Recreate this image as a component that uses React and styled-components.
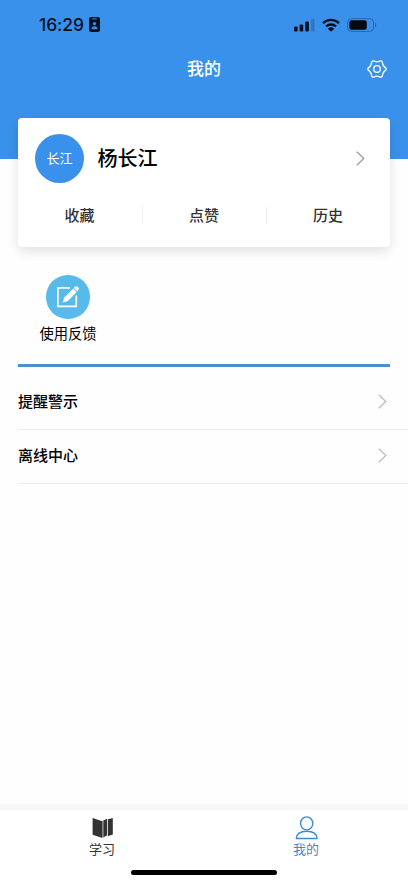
import React, { useState } from "react";
import styled, { createGlobalStyle } from "styled-components";

const GlobalStyle = createGlobalStyle`
  * {
    box-sizing: border-box;
  }

  body {
    margin: 0;
    background: #fefefe;
    font-family: "Noto Sans CJK SC", sans-serif;
    color: #000;
  }

  button {
    border: none;
    background: none;
    padding: 0;
    font: inherit;
    color: inherit;
  }
`;

const stats = ["收藏", "点赞", "历史"];
const menu = ["提醒警示", "离线中心"];

export default function App() {
  const [tab, setTab] = useState("mine"); // study | mine

  return (
    <Page>
      <GlobalStyle />
      <Header>
        <StatusBar>
          <Clock>
            16:29
            <BadgeIcon />
          </Clock>
          <Signals>
            <CellIcon />
            <WifiIcon />
            <BatteryIcon />
          </Signals>
        </StatusBar>
        <TitleBar>
          <Title>我的</Title>
          <SettingsButton aria-label="设置">
            <GearIcon />
          </SettingsButton>
        </TitleBar>
      </Header>

      <ProfileCard>
        <Profile>
          <Avatar>长江</Avatar>
          <Name>杨长江</Name>
          <Chevron color="#999" />
        </Profile>
        <Stats>
          {stats.map((label) => (
            <Stat key={label}>{label}</Stat>
          ))}
        </Stats>
      </ProfileCard>

      <Tools>
        <Tool>
          <ToolCircle>
            <EditIcon />
          </ToolCircle>
          <ToolLabel>使用反馈</ToolLabel>
        </Tool>
      </Tools>

      <Menu>
        {menu.map((label) => (
          <MenuRow key={label}>
            {label}
            <Chevron color="#bbb" />
          </MenuRow>
        ))}
      </Menu>

      <TabBar>
        <Tab onClick={() => setTab("study")} $active={tab === "study"}>
          <BookIcon />
          学习
        </Tab>
        <Tab onClick={() => setTab("mine")} $active={tab === "mine"}>
          <UserIcon />
          我的
        </Tab>
      </TabBar>
      <HomeArea>
        <HomeIndicator />
      </HomeArea>
    </Page>
  );
}

function BadgeIcon() {
  return (
    <svg width="11" height="15" viewBox="0 0 11 15">
      <rect width="11" height="15" rx="2.2" fill="#07111e" />
      <path d="M3.6 1.9h3.8" stroke="#3a91ec" strokeWidth="1" strokeLinecap="round" />
      <circle cx="5.5" cy="6.6" r="1.6" fill="#3a91ec" />
      <path d="M2.4 12.2c0-2 1.3-3 3.1-3s3.1 1 3.1 3z" fill="#3a91ec" />
    </svg>
  );
}

function CellIcon() {
  return (
    <svg width="21" height="14" viewBox="0 0 21 14">
      <g fill="#07111e">
        <rect x="0" y="8.6" width="3.6" height="4.9" rx="1" />
        <rect x="5.6" y="6.4" width="3.6" height="7.1" rx="1" />
        <rect x="11.3" y="3.6" width="3.6" height="9.9" rx="1" />
      </g>
      <rect x="17" y="0.8" width="3.4" height="12.7" rx="1" fill="#2f76c4" />
    </svg>
  );
}

function WifiIcon() {
  return (
    <svg width="18" height="14" viewBox="0 0 18 14" fill="none">
      <path
        d="M1 5.1a11.6 11.6 0 0 1 16 0M4 8.5a7.2 7.2 0 0 1 10 0"
        stroke="#07111e"
        strokeWidth="2.3"
      />
      <path d="M5.8 10.7a4.7 4.7 0 0 1 6.4 0L9 13.8z" fill="#07111e" />
    </svg>
  );
}

function BatteryIcon() {
  return (
    <svg width="31" height="14" viewBox="0 0 31 14">
      <rect
        x="0.6"
        y="0.6"
        width="26"
        height="12.8"
        rx="3.8"
        fill="none"
        stroke="#2767ac"
      />
      <rect x="2.4" y="2.3" width="17.4" height="9.4" rx="2.2" fill="#050a12" />
      <path d="M28 4.8c1.6.5 1.6 3.9 0 4.4z" fill="#2767ac" />
    </svg>
  );
}

function GearIcon() {
  return (
    <svg width="20" height="20" viewBox="0 0 20 20" fill="none" stroke="#fff">
      <path
        d="M18.05 8.35Q20.4 10 18.05 11.65Q15.7 13.3 15.45 16.15Q15.2 19 12.6 17.8Q10 16.6 7.4 17.8Q4.8 19 4.55 16.15Q4.3 13.3 1.95 11.65Q-.4 10 1.95 8.35Q4.3 6.7 4.55 3.85Q4.8 1 7.4 2.2Q10 3.4 12.6 2.2Q15.2 1 15.45 3.85Q15.7 6.7 18.05 8.35Z"
        strokeWidth="1.3"
        strokeLinejoin="round"
      />
      <circle cx="10" cy="10" r="3.3" strokeWidth="1.3" />
    </svg>
  );
}

function Chevron({ color }) {
  return (
    <svg width="9" height="15" viewBox="0 0 9 15" fill="none">
      <path d="M.8.8L7.8 7.5L.8 14.2" stroke={color} strokeWidth="1.2" />
    </svg>
  );
}

function EditIcon() {
  return (
    <svg width="24" height="24" viewBox="0 0 24 24" fill="none">
      <path d="M14 2.9H1.9v18.4h18.4V10.5" stroke="#fff" strokeWidth="1.7" />
      <path d="M6.9 17.4l1.2-4.6 9.2-9.2 3.4 3.4-9.2 9.2z" fill="#fff" />
      <path d="M17.9 2.9l.8-.8a2.35 2.35 0 0 1 3.4 3.4l-.8.8z" fill="#fff" />
    </svg>
  );
}

function BookIcon() {
  return (
    <svg width="22" height="22" viewBox="0 0 22 22" fill="#333">
      <path d="M1.6 1L10.6 4.1L11.6 3.8V20.8H10.6L1.6 17.7z" />
      <path d="M12.3 3.6L16.2 1.8V18.2L12.3 20.6z" />
      <path d="M17 2.2L21.8.9V17.4L16.6 19.2L17 18.2z" />
    </svg>
  );
}

function UserIcon() {
  return (
    <svg width="24" height="24" viewBox="0 0 24 24" fill="none" stroke="#428bca" strokeWidth="1.4">
      <ellipse cx="12.7" cy="7.4" rx="6.1" ry="6.5" />
      <path d="M2.3 22.5C2.6 18 6.6 15.3 12.7 15.3S22.8 18 23.1 22.5z" strokeLinejoin="round" />
    </svg>
  );
}

const Page = styled.div`
  display: flex;
  flex-direction: column;
  width: 100%;
  height: 883px;
  overflow: hidden;
`;

const Header = styled.header`
  flex: none;
  height: 159px;
  background: #3a91ec;
`;

const StatusBar = styled.div`
  display: flex;
  align-items: center;
  justify-content: space-between;
  height: 49px;
  padding: 0 30px 0 39px;
`;

const Clock = styled.div`
  display: flex;
  align-items: center;
  gap: 5px;
  font: 500 17.5px/20px Inter, sans-serif;
  letter-spacing: -0.1px;
  color: #07111e;
`;

const Signals = styled.div`
  display: flex;
  align-items: center;
  gap: 7px;
`;

const TitleBar = styled.div`
  display: grid;
  grid-template-columns: 1fr auto 1fr;
  align-items: center;
  height: 40px;
  padding: 0 21px;
`;

const Title = styled.h1`
  grid-column: 2;
  margin: 0;
  padding-bottom: 2px;
  font-size: 17px;
  line-height: 24px;
  font-weight: 500;
  color: #fff;
`;

const SettingsButton = styled.button`
  display: flex;
  justify-self: end;
`;

const ProfileCard = styled.section`
  flex: none;
  height: 129px;
  margin: -41px 18px 0;
  border-radius: 4px;
  background: #fff;
  box-shadow: 0 4px 12px rgba(0, 0, 0, 0.12);
`;

const Profile = styled.div`
  display: flex;
  align-items: center;
  height: 80px;
  padding: 0 25px 0 17px;

  svg {
    margin-left: auto;
  }
`;

const Avatar = styled.div`
  display: flex;
  align-items: center;
  justify-content: center;
  width: 49px;
  height: 49px;
  padding-bottom: 2px;
  border-radius: 50%;
  background: #3a91ec;
  font-size: 13px;
  color: #fff;
`;

const Name = styled.div`
  margin-left: 13.5px;
  font-size: 20px;
  line-height: 28px;
  font-weight: 500;
`;

const Stats = styled.div`
  display: grid;
  grid-template-columns: repeat(3, 1fr);
  padding-top: 9px;
`;

const Stat = styled.button`
  height: 17px;
  padding: 0 1px 2px 0;
  font-size: 15px;
  line-height: 15px;
  font-weight: 500;
  color: #333;

  & + & {
    border-left: 1px solid #f0f0f0;
  }
`;

const Tools = styled.section`
  flex: none;
  display: flex;
  height: 120px;
  margin: 0 18px;
  padding-top: 28px;
  border-bottom: 3px solid #4a90d0;
`;

const Tool = styled.button`
  display: flex;
  flex-direction: column;
  align-items: center;
  width: 100px;
`;

const ToolCircle = styled.span`
  display: flex;
  align-items: center;
  justify-content: center;
  width: 43.5px;
  height: 43.5px;
  border-radius: 50%;
  background: #56bbea;
`;

const ToolLabel = styled.span`
  margin-top: 4px;
  font-size: 14.3px;
  line-height: 20px;
`;

const Menu = styled.nav`
  flex: 1;
  padding: 9px 0 0 18px;
`;

const MenuRow = styled.a`
  display: flex;
  align-items: center;
  justify-content: space-between;
  height: 54px;
  padding: 0 21px 4px 0;
  border-bottom: 1px solid #ededed;
  font-size: 15px;
  font-weight: 500;

  svg {
    margin-top: 2px;
  }
`;

const TabBar = styled.nav`
  flex: none;
  display: grid;
  grid-template-columns: 1fr 1fr;
  height: 60px;
  border-top: 6px solid #f7f7f7;
  background: #fff;
`;

const Tab = styled.button`
  display: flex;
  flex-direction: column;
  align-items: center;
  font-size: 13px;
  line-height: 18px;
  color: ${({ $active }) => ($active ? "#428bca" : "#333")};

  svg {
    flex: none;
    height: 24px;
    margin: 6px 0 0;
  }
`;

const HomeArea = styled.div`
  flex: none;
  display: flex;
  justify-content: center;
  height: 19px;
  padding-top: 6px;
  background: #fff;
`;

const HomeIndicator = styled.div`
  width: 146px;
  height: 5px;
  border-radius: 3px;
  background: #000;
`;
